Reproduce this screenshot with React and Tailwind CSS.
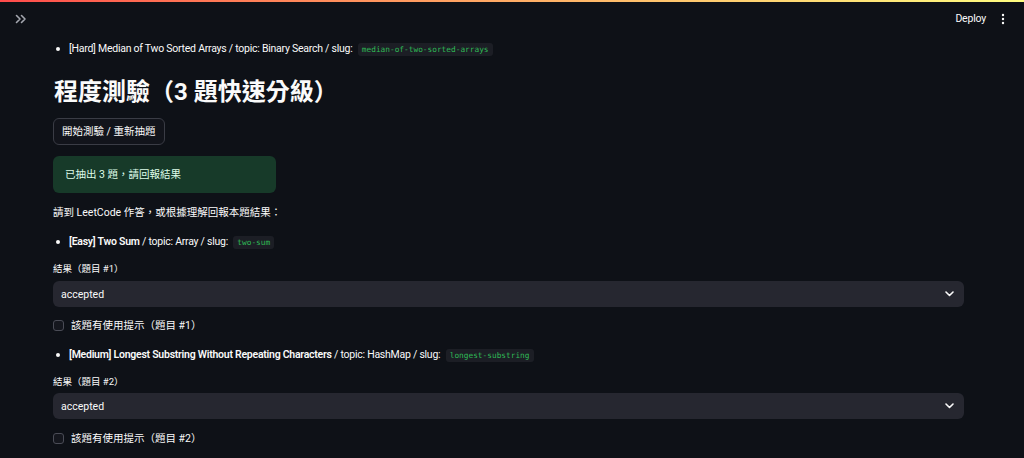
import React from 'react';

const sans = "font-['Roboto','Noto_Sans_CJK_TC',sans-serif]";

function Code({ children }) {
  return (
    <code className="ml-[3px] rounded-[3px] bg-[#1c1e25] px-[4px] py-[2px] font-['DejaVu_Sans_Mono',monospace] text-[7.8px] tracking-normal text-[#2fb955]">
      {children}
    </code>
  );
}

function Bullet({ children, className = '' }) {
  return (
    <div className={`flex items-center ${className}`}>
      <span className="ml-[3px] mr-[9px] h-[4px] w-[4px] rounded-full bg-[#fafafa]" />
      <div className="text-[10.5px] leading-none tracking-[-0.25px]">{children}</div>
    </div>
  );
}

function Select({ className = '' }) {
  return (
    <div className={`flex h-[26px] items-center justify-between rounded-[6px] bg-[#262730] pl-[8px] pr-[10px] ${className}`}>
      <span className="text-[10.5px]">accepted</span>
      <svg width="9" height="6" viewBox="0 0 9 6" fill="none">
        <path d="M1 1l3.5 3.5L8 1" stroke="#fafafa" strokeWidth="1.6" strokeLinecap="round" strokeLinejoin="round" />
      </svg>
    </div>
  );
}

function Check({ label, className = '' }) {
  return (
    <div className={`flex h-[16px] items-center gap-[7px] ${className}`}>
      <span className="h-[11px] w-[11px] rounded-[3px] border border-[#4a4c56] bg-[#15171e]" />
      <span className="text-[10.5px]">{label}</span>
    </div>
  );
}

export default function App() {
  return (
    <div className={`h-[458px] w-[1024px] overflow-hidden bg-[#0e1117] text-[#fafafa] ${sans}`}>
      <div className="h-[2px] bg-gradient-to-r from-[#ff4b4b] to-[#fffd80]" />
      <div className="flex h-[34px] items-center justify-between pl-[15px] pr-[19px]">
        <svg width="12" height="10" viewBox="0 0 12 10" fill="none">
          <path d="M1.5 1.5L5 5L1.5 8.5M6.5 1.5L10 5L6.5 8.5" stroke="#a3a6ae" strokeWidth="1.6" strokeLinecap="round" strokeLinejoin="round" />
        </svg>
        <div className="flex items-center gap-[15px]">
          <span className="text-[10.5px] tracking-[-0.2px]">Deploy</span>
          <svg width="4" height="12" viewBox="0 0 4 12">
            <circle cx="2" cy="2" r="1.2" fill="#fafafa" />
            <circle cx="2" cy="6" r="1.2" fill="#fafafa" />
            <circle cx="2" cy="10" r="1.2" fill="#fafafa" />
          </svg>
        </div>
      </div>

      <div className="ml-[53px] flex w-[911px] flex-col">
        <Bullet className="mt-[2px] h-[22px]">
          [Hard] Median of Two Sorted Arrays / topic: Binary Search / slug: <Code>median-of-two-sorted-arrays</Code>
        </Bullet>

        <h2 className="mt-[14px] flex h-[36px] items-center pl-[1px] text-[24px] font-bold">
          程度測驗（3 題快速分級）
        </h2>

        <div className="mt-[8px]">
          <button className="h-[27px] rounded-[6px] border border-[#3a3c45] bg-[#12141b] px-[8px] text-[10.5px]">
            開始測驗 / 重新抽題
          </button>
        </div>

        <div className="mt-[11px] flex h-[37px] w-[223px] items-center rounded-[6px] bg-[#173a29] px-[12px] text-[10.5px] text-[#dffde9]">
          已抽出 3 題，請回報結果
        </div>

        <div className="mt-[9px] flex h-[20px] items-center text-[10.5px]">
          請到 LeetCode 作答，或根據理解回報本題結果：
        </div>

        <Bullet className="mt-[10px] h-[20px]">
          <b className="font-semibold">[Easy] Two Sum</b> / topic: Array / slug: <Code>two-sum</Code>
        </Bullet>

        <div className="mt-[9px] flex h-[16px] items-center text-[9.5px]">結果（題目 #1）</div>
        <Select className="mt-[4px]" />
        <Check className="mt-[10px]" label="該題有使用提示（題目 #1）" />

        <Bullet className="mt-[12px] h-[20px]">
          <b className="font-semibold">[Medium] Longest Substring Without Repeating Characters</b> / topic: HashMap / slug: <Code>longest-substring</Code>
        </Bullet>

        <div className="mt-[9px] flex h-[16px] items-center text-[9.5px]">結果（題目 #2）</div>
        <Select className="mt-[3px]" />
        <Check className="mt-[11px]" label="該題有使用提示（題目 #2）" />
      </div>
    </div>
  );
}
